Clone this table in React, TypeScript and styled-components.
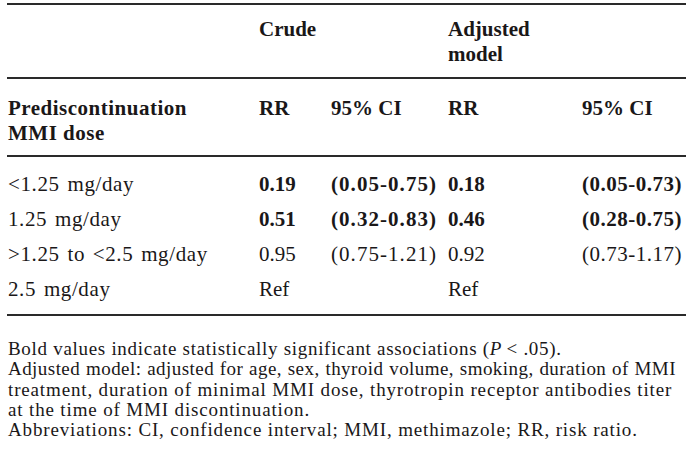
import React from "react";
import styled, { createGlobalStyle } from "styled-components";

const Global = createGlobalStyle`
  html, body { margin: 0; padding: 0; background: #ffffff; }
  body { font-family: "Liberation Serif", "Times New Roman", serif; color: #1a1718; }
`;

const Page = styled.div`
  width: 692px;
  height: 460px;
  padding: 3px 6px 0 7px;
  box-sizing: border-box;
`;

const Table = styled.div`
  display: grid;
  grid-template-columns: 251px 72px 117px 134px 1fr;
  border-top: 2px solid #2a2a2a;
  border-bottom: 2px solid #2a2a2a;
  font-size: 21px;
`;

const Row = styled.div<{ $padTop: number; $padBottom: number; $lh: number; $rule?: boolean }>`
  display: contents;
  & > div {
    padding-top: ${(p) => p.$padTop}px;
    padding-bottom: ${(p) => p.$padBottom}px;
    line-height: ${(p) => p.$lh}px;
    border-bottom: ${(p) => (p.$rule ? "2px solid #2a2a2a" : "none")};
  }
`;

const Cell = styled.div<{ $bold?: boolean; $spacing?: number; $word?: number }>`
  padding-left: 1px;
  font-weight: ${(p) => (p.$bold ? 700 : 400)};
  letter-spacing: ${(p) => p.$spacing ?? 0}px;
  word-spacing: ${(p) => p.$word ?? 0}px;
  white-space: nowrap;
`;

const Notes = styled.div`
  margin-top: 23px;
  padding-left: 1px;
  font-size: 19px;
  line-height: 20.3px;
`;

const NoteLine = styled.div<{ $width?: number; $spacing: number }>`
  width: ${(p) => (p.$width ? `${p.$width}px` : "auto")};
  letter-spacing: ${(p) => p.$spacing}px;
  text-align: ${(p) => (p.$width ? "justify" : "left")};
  text-align-last: ${(p) => (p.$width ? "justify" : "left")};
  white-space: nowrap;
`;

type DataRow = { label: string; rr: string; ci: string; arr: string; aci: string; bold: boolean };

const rows: DataRow[] = [
  { label: "<1.25 mg/day", rr: "0.19", ci: "(0.05-0.75)", arr: "0.18", aci: "(0.05-0.73)", bold: true },
  { label: "1.25 mg/day", rr: "0.51", ci: "(0.32-0.83)", arr: "0.46", aci: "(0.28-0.75)", bold: true },
  { label: ">1.25 to <2.5 mg/day", rr: "0.95", ci: "(0.75-1.21)", arr: "0.92", aci: "(0.73-1.17)", bold: false },
  { label: "2.5 mg/day", rr: "Ref", ci: "", arr: "Ref", aci: "", bold: false },
];

export default function App() {
  return (
    <>
      <Global />
      <Page>
        <Table>
          <Row $padTop={12} $padBottom={10} $lh={25} $rule>
            <Cell />
            <Cell $bold>Crude</Cell>
            <Cell />
            <Cell $bold>
              Adjusted
              <br />
              model
            </Cell>
            <Cell />
          </Row>
          <Row $padTop={17} $padBottom={9} $lh={25} $rule>
            <Cell $bold $spacing={0.5}>
              Prediscontinuation
              <br />
              MMI dose
            </Cell>
            <Cell $bold>RR</Cell>
            <Cell $bold>95% CI</Cell>
            <Cell $bold>RR</Cell>
            <Cell $bold>95% CI</Cell>
          </Row>
          {rows.map((r, i) => (
            <Row key={r.label} $padTop={i === 0 ? 10 : 0} $padBottom={i === rows.length - 1 ? 7 : 0} $lh={35}>
              <Cell $spacing={0.6} $word={2}>{r.label}</Cell>
              <Cell $bold={r.bold}>{r.rr}</Cell>
              <Cell $bold={r.bold} $spacing={1.05}>{r.ci}</Cell>
              <Cell $bold={r.bold}>{r.arr}</Cell>
              <Cell $bold={r.bold} $spacing={0.5}>{r.aci}</Cell>
            </Row>
          ))}
        </Table>
        <Notes>
          <NoteLine $spacing={0.7}>
            Bold values indicate statistically significant associations (<i>P</i>&thinsp;&lt; .05).
          </NoteLine>
          <NoteLine $width={668} $spacing={0.45}>
            Adjusted model: adjusted for age, sex, thyroid volume, smoking, duration of MMI
          </NoteLine>
          <NoteLine $width={659} $spacing={0.85}>
            treatment, duration of minimal MMI dose, thyrotropin receptor antibodies titer
          </NoteLine>
          <NoteLine $spacing={0.85}>at the time of MMI discontinuation.</NoteLine>
          <NoteLine $spacing={0.85}>Abbreviations: CI, confidence interval; MMI, methimazole; RR, risk ratio.</NoteLine>
        </Notes>
      </Page>
    </>
  );
}
